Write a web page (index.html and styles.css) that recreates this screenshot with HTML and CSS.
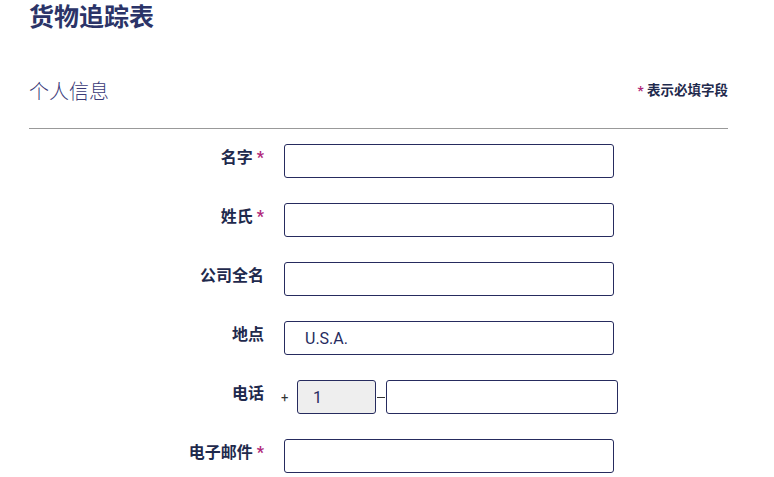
FILE: index.html
```html
<!DOCTYPE html>
<html lang="zh">
<head>
  <meta charset="UTF-8" />
  <title>货物追踪表</title>
  <link rel="stylesheet" href="styles.css">
</head>
<body>
  <div class="page">
    <h1 class="title">货物追踪表</h1>

    <div class="section-head">
      <h2>个人信息</h2>
      <span class="req-note"><span class="star">*</span> 表示必填字段</span>
    </div>

    <form class="form">
      <div class="row">
        <label>名字 <span class="star">*</span></label>
        <input type="text" class="field" />
      </div>
      <div class="row">
        <label>姓氏 <span class="star">*</span></label>
        <input type="text" class="field" />
      </div>
      <div class="row">
        <label>公司全名</label>
        <input type="text" class="field" />
      </div>
      <div class="row">
        <label>地点</label>
        <input type="text" class="field" value="U.S.A." />
      </div>
      <div class="row">
        <label>电话</label>
        <div class="phone">
          <span class="plus">+</span>
          <input type="text" class="field code" value="1" readonly />
          <span class="dash"></span>
          <input type="text" class="field number" />
        </div>
      </div>
      <div class="row">
        <label>电子邮件 <span class="star">*</span></label>
        <input type="text" class="field" />
      </div>
    </form>
  </div>
</body>
</html>
```

FILE: styles.css
```css
body {
  margin: 0;
  padding: 0;
  background: #ffffff;
  font-family: Roboto, "Noto Sans CJK SC", sans-serif;
  color: #1f2a4d;
}

.page {
  width: 699px;
  margin-left: 29px;
}

.title {
  margin: 0;
  padding-top: 3px;
  font-size: 25px;
  line-height: 30px;
  font-weight: 700;
  color: #2b3468;
}

.section-head {
  display: flex;
  justify-content: space-between;
  align-items: center;
  margin-top: 45px;
  padding-bottom: 22px;
  border-bottom: 1px solid #999999;
}

.section-head h2 {
  margin: 0;
  font-size: 20px;
  line-height: 28px;
  font-weight: 300;
  color: #3b3a78;
}

.req-note {
  margin-bottom: 6px;
  font-size: 13.5px;
  font-weight: 700;
  color: #1f2a4d;
}

.star {
  color: #b0287a;
}

.form {
  padding-top: 15px;
}

.row {
  display: grid;
  grid-template-columns: 235px 1fr;
  column-gap: 20px;
  align-items: start;
  height: 59px;
}

.row label {
  text-align: right;
  font-size: 16px;
  font-weight: 700;
  line-height: 28px;
  color: #1f2a4d;
}

.field {
  box-sizing: border-box;
  width: 330px;
  height: 34px;
  border: 1px solid #262b5e;
  border-radius: 3px;
  padding: 0 20px;
  font-family: Roboto, "Noto Sans CJK SC", sans-serif;
  font-size: 16px;
  color: #262b5e;
  background: #ffffff;
}

.phone {
  display: flex;
  align-items: center;
}

.plus {
  width: 13px;
  font-size: 13px;
  color: #333;
  margin-left: -3px;
  padding-right: 3px;
}

.field.code {
  width: 79px;
  padding: 0 15px;
  background: #eeeeee;
}

.dash {
  width: 8px;
  height: 1px;
  background: #333;
  margin: 0 1px 0 1px;
}

.field.number {
  width: 232px;
}
```
